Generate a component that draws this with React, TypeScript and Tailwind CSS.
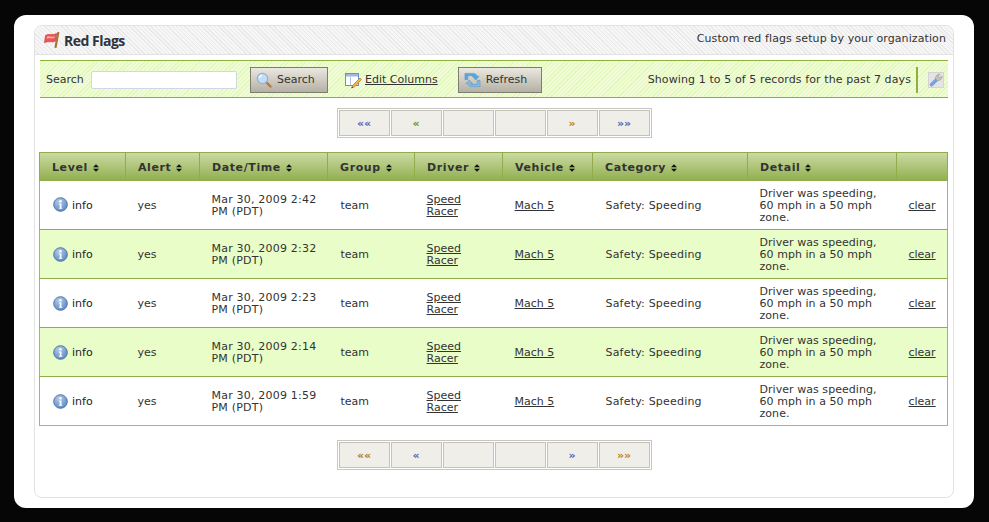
import React from "react";

const rows = [
  "Mar 30, 2009 2:42 PM (PDT)",
  "Mar 30, 2009 2:32 PM (PDT)",
  "Mar 30, 2009 2:23 PM (PDT)",
  "Mar 30, 2009 2:14 PM (PDT)",
  "Mar 30, 2009 1:59 PM (PDT)",
];

const columns = [
  { label: "Level", width: "w-[86px]" },
  { label: "Alert", width: "w-[74px]" },
  { label: "Date/Time", width: "w-[128px]" },
  { label: "Group", width: "w-[87px]" },
  { label: "Driver", width: "w-[88px]" },
  { label: "Vehicle", width: "w-[90px]" },
  { label: "Category", width: "w-[155px]" },
  { label: "Detail", width: "w-[149px]" },
  { label: "", width: "w-[51px]" },
];

function SortIcon() {
  return (
    <svg width="6" height="8" viewBox="0 0 7 9" className="ml-[5px] inline-block align-[-1px]">
      <path d="M3.5 0 L7 3.6 H0 Z M0 5.4 H7 L3.5 9 Z" fill="#111" />
    </svg>
  );
}

function InfoIcon() {
  return (
    <svg width="15" height="15" viewBox="0 0 16 16" className="mb-[2px] ml-px shrink-0">
      <defs>
        <radialGradient id="infoFill" cx="40%" cy="30%" r="80%">
          <stop offset="0%" stopColor="#b4cdea" />
          <stop offset="100%" stopColor="#5180bd" />
        </radialGradient>
      </defs>
      <circle cx="8" cy="8" r="7.3" fill="url(#infoFill)" stroke="#4f74a8" strokeWidth="1" />
      <circle cx="8" cy="4.6" r="1.3" fill="#fff" />
      <path d="M6.4 7 H9 V11.4 H10 V12.4 H6.2 V11.4 H7.2 V8 H6.4 Z" fill="#fff" />
    </svg>
  );
}

function FlagIcon() {
  return (
    <svg width="16" height="16" viewBox="0 0 16 16">
      <path d="M1.5 3.5 C5 1 8 4 12.8 1.5 L11.6 9 C8 11 5 8.5 0.5 10.5 Z" fill="#ea5559" stroke="#d8413f" strokeWidth="0.7" />
      <path d="M3 4.4 C5.5 3.4 8 5.6 11 4.2 L10.6 6 C8 7 5.5 5.6 2.6 6.8 Z" fill="#f6a9a9" />
      <path d="M14.2 1 L11.6 15" stroke="#a8743a" strokeWidth="2.2" strokeLinecap="round" />
    </svg>
  );
}

function SearchIcon() {
  return (
    <svg width="16" height="16" viewBox="0 0 16 16">
      <path d="M10 10 L14.5 14.5" stroke="#b87a3c" strokeWidth="2.4" strokeLinecap="round" />
      <circle cx="6.5" cy="6.5" r="5.2" fill="#c4dcf4" stroke="#8fb2d8" strokeWidth="1.2" />
      <path d="M3.5 6 C3.6 4.6 4.6 3.6 6 3.4" stroke="#fff" strokeWidth="1.2" fill="none" />
    </svg>
  );
}

function ColumnsIcon() {
  return (
    <svg width="17" height="17" viewBox="0 0 17 17">
      <rect x="0.5" y="1.5" width="13" height="12" fill="#fff" stroke="#6d8fc0" />
      <rect x="1" y="2" width="12" height="2.5" fill="#9db9e0" />
      <path d="M5.5 4.5 V13" stroke="#b3c6e2" />
      <path d="M15 6 L8 13 L6.5 16 L9.6 14.8 L16.4 7.6 Z" fill="#f2b84e" stroke="#b9792c" strokeWidth="0.8" />
      <path d="M6.5 16 L7.2 14.4 L8.2 15.4 Z" fill="#333" />
    </svg>
  );
}

function RefreshIcon() {
  return (
    <svg width="17" height="16" viewBox="0 0 18 16">
      <path d="M1 1 H10 C12 1 13.4 2.2 13.8 4 H16 L12.5 8 L8.8 4 H10.8 C10.5 3.6 10 3.4 9.4 3.4 H4 V7.5 H1 Z" fill="#5ba6dc" stroke="#4a8dc4" strokeWidth="0.5" />
      <path d="M17 15 H8 C6 15 4.6 13.8 4.2 12 H2 L5.5 8 L9.2 12 H7.2 C7.5 12.4 8 12.6 8.6 12.6 H14 V8.5 H17 Z" fill="#7cbde8" stroke="#4a8dc4" strokeWidth="0.5" />
    </svg>
  );
}

function WrenchIcon() {
  return (
    <svg width="14" height="14" viewBox="0 0 12 12">
      <path d="M1 9.4 L5.6 5 L7.4 6.6 L2.8 11.2 C2 11.6 0.6 10.6 1 9.4 Z" fill="#7ba2e2" stroke="#6287cc" strokeWidth="0.5" />
      <path d="M5.6 5 C5.3 2.8 7 0.8 9.6 0.8 L8 2.6 L9.2 4 L11.2 2.6 C11.4 5 9.4 6.8 7.4 6.6 Z" fill="#c2c2ba" stroke="#9a9a92" strokeWidth="0.5" />
    </svg>
  );
}

function Pager({ colors }: { colors: string[] }) {
  const labels = ["««", "«", "", "", "»", "»»"];
  return (
    <div className="mx-auto flex w-[315px] gap-px border border-[#c9c7c0] p-px">
      {labels.map((label, i) => (
        <div
          key={i}
          className={`flex h-[26px] w-[51px] items-center justify-center border border-[#c4c2ba] bg-[#f0eee9] text-[11px] font-bold leading-none ${colors[i]}`}
        >
          {label}
        </div>
      ))}
    </div>
  );
}

function ToolButton({ icon, label, width }: { icon: React.ReactNode; label: string; width: string }) {
  return (
    <button className={`flex h-[26px] ${width} items-center gap-[5px] border border-[#7d7d72] bg-gradient-to-b from-[#ebe8e2] to-[#b4b0a3] pl-[5px] text-[11px] text-[#333]`}>
      {icon}
      {label}
    </button>
  );
}

export default function App() {
  return (
    <div className="h-[522px] w-[989px] overflow-hidden bg-[#060606] px-[14px] pt-[15px] font-['DejaVu_Sans',Verdana,sans-serif] text-[11px] text-[#333]">
      <div className="h-[493px] w-[960px] rounded-[12px] bg-white px-[20px] pt-[10px]">
        <div className="h-[473px] w-[920px] rounded-[8px] border border-[#e2e2e2]">
          <div className="flex h-[29px] items-center justify-between rounded-t-[8px] border-b border-[#e2e2e2] bg-[repeating-linear-gradient(45deg,#f6f6f6_0,#f6f6f6_2px,#e9e9e9_2px,#e9e9e9_3px)] pl-[9px] pr-[7px]">
            <div className="flex items-center gap-[4px]">
              <FlagIcon />
              <span className="font-['Open_Sans',sans-serif] text-[14px] font-bold tracking-[-0.5px] text-[#2c3440]">Red Flags</span>
            </div>
            <span className="pb-[2px] text-[11px] tracking-[0.1px] text-[#333]">Custom red flags setup by your organization</span>
          </div>

          <div className="ml-[5px] mt-[5px] flex h-[38px] w-[908px] items-center border-y border-[#8fb03a] bg-[repeating-linear-gradient(135deg,#f0fcd4_0,#f0fcd4_2px,#e2f7bd_2px,#e2f7bd_3px)] pl-[6px] pr-[4px] pt-[2px]">
            <span className="w-[37px]">Search</span>
            <input className="ml-[8px] h-[18px] w-[146px] rounded-[2px] border border-[#cdd8e4] bg-white" />
            <div className="ml-[13px]">
              <ToolButton icon={<SearchIcon />} label="Search" width="w-[78px]" />
            </div>
            <div className="ml-[17px] flex items-center gap-[3px]">
              <ColumnsIcon />
              <a className="underline">Edit Columns</a>
            </div>
            <div className="ml-[20px]">
              <ToolButton icon={<RefreshIcon />} label="Refresh" width="w-[84px]" />
            </div>
            <span className="ml-auto tracking-[0.1px]">Showing 1 to 5 of 5 records for the past 7 days</span>
            <div className="ml-[5px] h-[26px] w-[2px] bg-[#8fb03a]" />
            <div className="ml-[10px] flex h-[16px] w-[16px] items-center justify-center border border-[#d4d4d4] bg-[#e4e4e4]">
              <WrenchIcon />
            </div>
          </div>

          <div className="mt-[10px]">
            <Pager colors={["text-[#4f63b8]", "text-[#6f8a2c]", "", "", "text-[#c07f22]", "text-[#4f63b8]"]} />
          </div>

          <table className="ml-[4px] mt-[14px] w-[909px] table-fixed border-collapse border border-[#a9a9a9] border-t-0">
            <thead>
              <tr className="h-[28px] bg-gradient-to-b from-[#ccdaa2] to-[#8fae4b]">
                {columns.map((c) => (
                  <th
                    key={c.label}
                    className={`${c.width} border-x border-t border-[#8fae4b] pl-[12px] pt-[3px] text-left text-[11px] font-bold tracking-[0.6px] text-[#333]`}
                  >
                    {c.label}
                    {c.label && <SortIcon />}
                  </th>
                ))}
              </tr>
            </thead>
            <tbody>
              {rows.map((date, i) => (
                <tr key={date} className={`h-[49px] border-b border-[#8fae4b] last:border-[#a9a9a9] [&>td]:pt-[2px] ${i % 2 === 1 ? "bg-[#e8fdc8]" : "bg-white"}`}>
                  <td className="pl-[12px]">
                    <div className="flex items-center gap-[4px] text-[#222]">
                      <InfoIcon />
                      info
                    </div>
                  </td>
                  <td className="pl-[12px]">yes</td>
                  <td className="pl-[12px] pr-[4px] leading-[12px] tracking-[0.2px]">{date}</td>
                  <td className="pl-[13px]">team</td>
                  <td className="pl-[12px] leading-[12px]">
                    <a className="underline">Speed<br />Racer</a>
                  </td>
                  <td className="pl-[12px]"><a className="underline">Mach 5</a></td>
                  <td className="pl-[13px] tracking-[0.2px]">Safety: Speeding</td>
                  <td className="pl-[12px] pr-[12px] leading-[12px] tracking-[0.05px]">Driver was speeding, 60 mph in a 50 mph zone.</td>
                  <td className="pl-[12px]"><a className="underline">clear</a></td>
                </tr>
              ))}
            </tbody>
          </table>

          <div className="mt-[14px]">
            <Pager colors={["text-[#a87c2c]", "text-[#4f63b8]", "", "", "text-[#4f63b8]", "text-[#c07f22]"]} />
          </div>
        </div>
      </div>
    </div>
  );
}
